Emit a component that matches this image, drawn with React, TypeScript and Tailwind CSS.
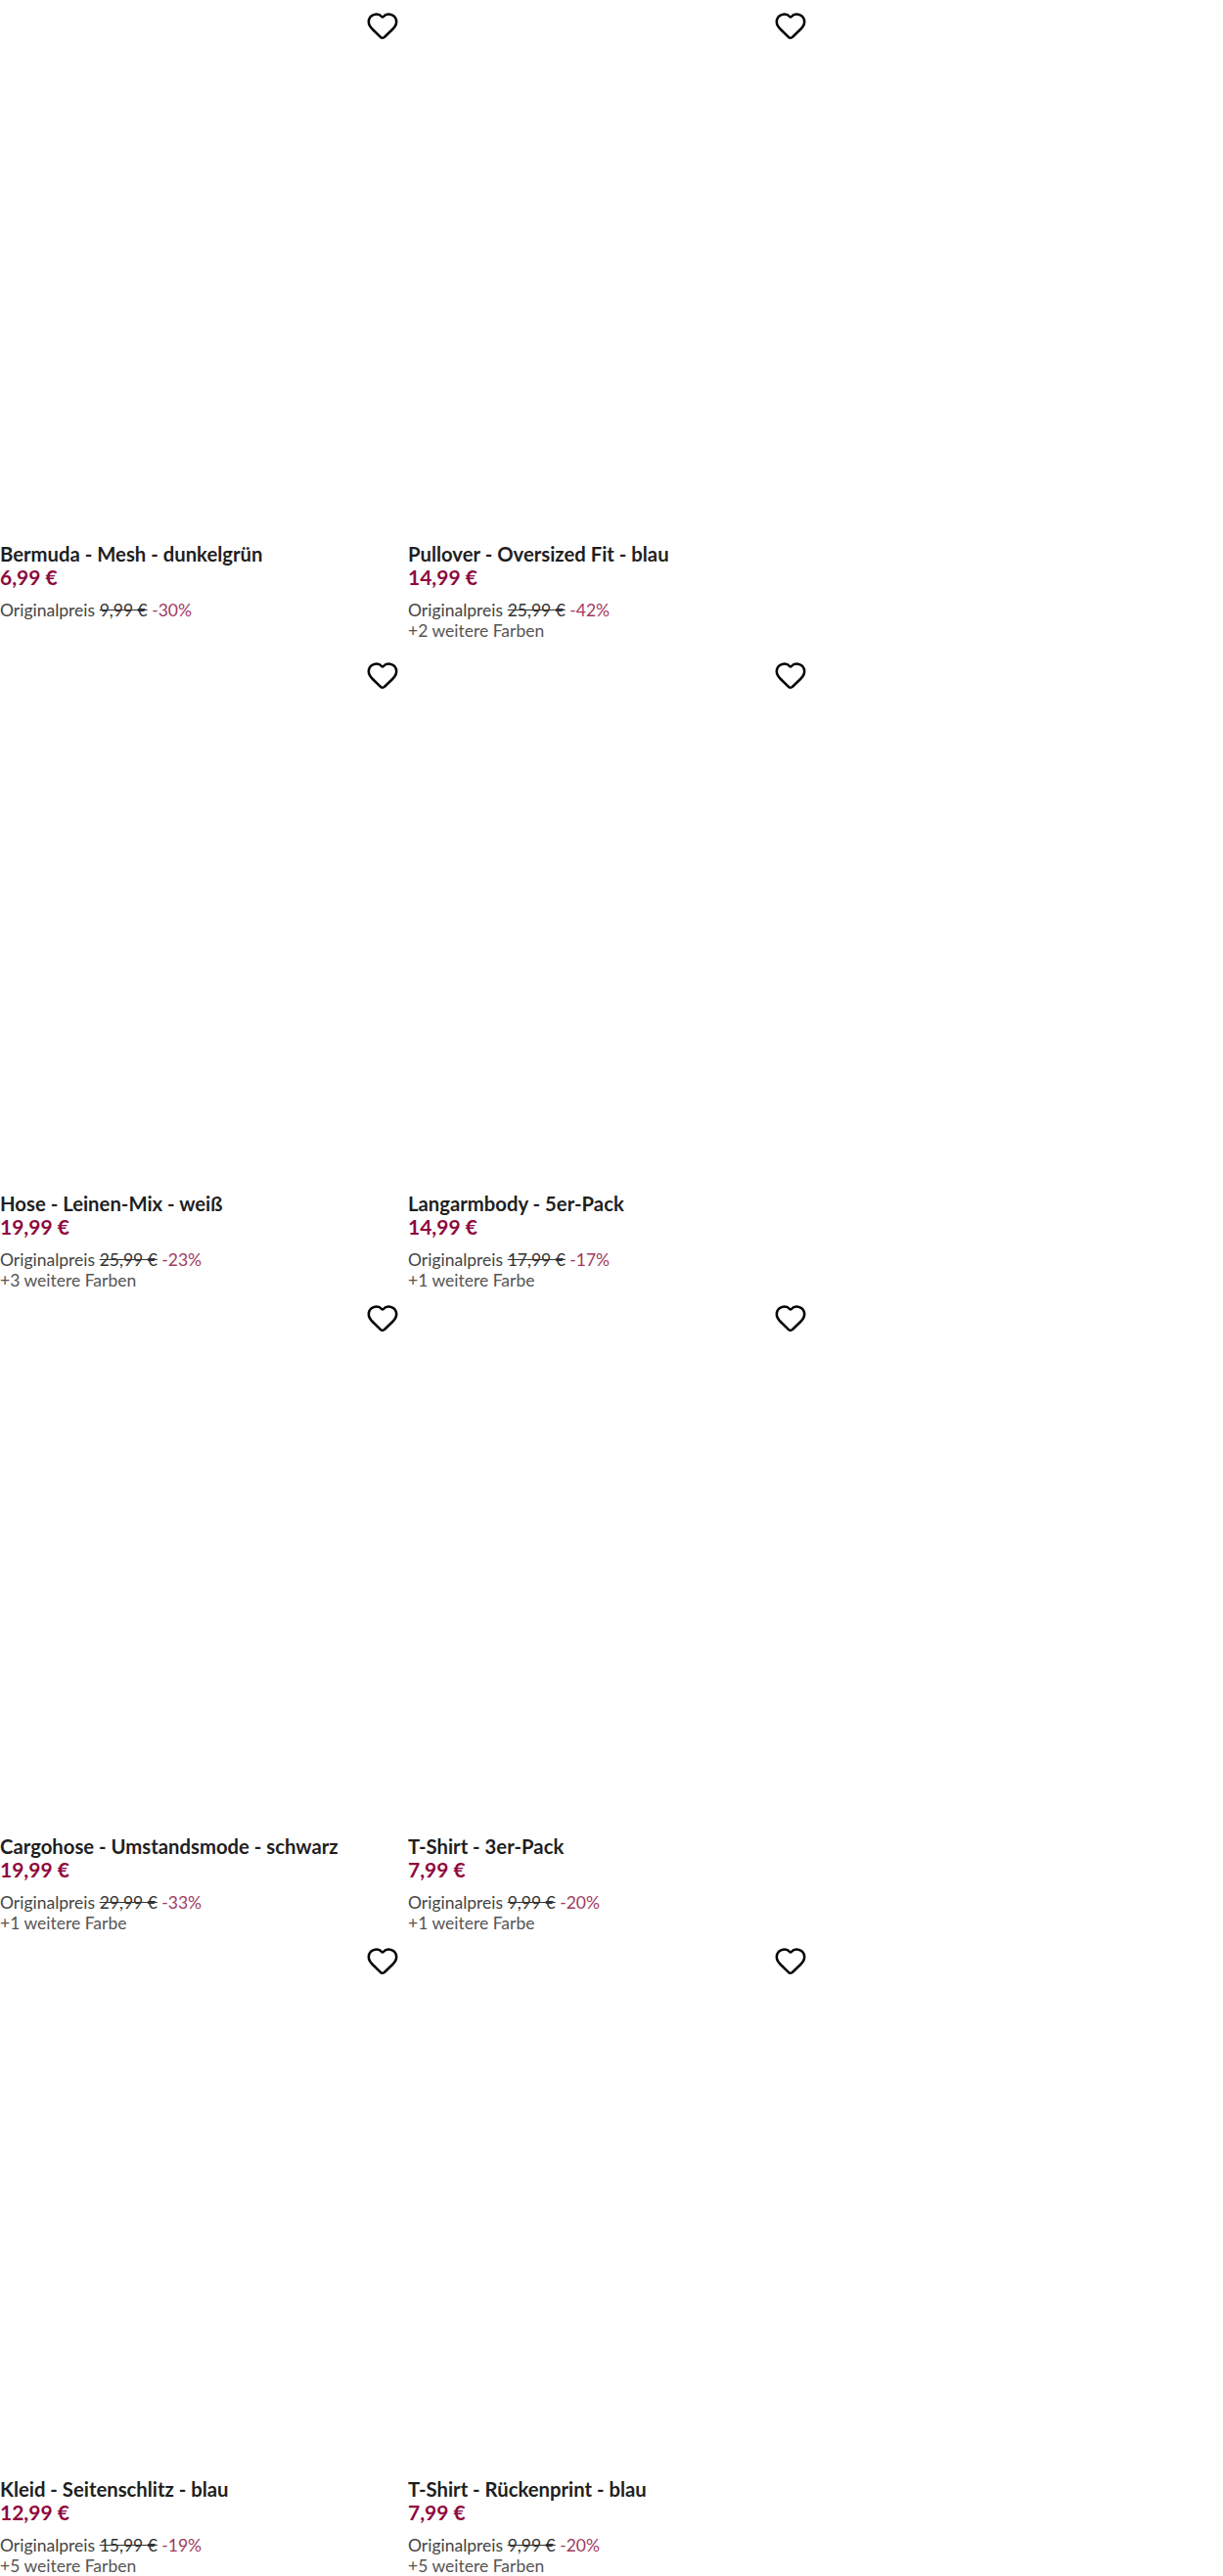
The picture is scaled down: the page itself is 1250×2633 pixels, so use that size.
import { Heart } from "lucide-react";

type Product = {
  title: string;
  price: string;
  original: string;
  discount: string;
  colors?: string;
};

const rows: Product[][] = [
  [
    { title: "Bermuda - Mesh - dunkelgrün", price: "6,99 €", original: "9,99 €", discount: "-30%" },
    { title: "Pullover - Oversized Fit - blau", price: "14,99 €", original: "25,99 €", discount: "-42%", colors: "+2 weitere Farben" },
  ],
  [
    { title: "Hose - Leinen-Mix - weiß", price: "19,99 €", original: "25,99 €", discount: "-23%", colors: "+3 weitere Farben" },
    { title: "Langarmbody - 5er-Pack", price: "14,99 €", original: "17,99 €", discount: "-17%", colors: "+1 weitere Farbe" },
  ],
  [
    { title: "Cargohose - Umstandsmode - schwarz", price: "19,99 €", original: "29,99 €", discount: "-33%", colors: "+1 weitere Farbe" },
    { title: "T-Shirt - 3er-Pack", price: "7,99 €", original: "9,99 €", discount: "-20%", colors: "+1 weitere Farbe" },
  ],
  [
    { title: "Kleid - Seitenschlitz - blau", price: "12,99 €", original: "15,99 €", discount: "-19%", colors: "+5 weitere Farben" },
    { title: "T-Shirt - Rückenprint - blau", price: "7,99 €", original: "9,99 €", discount: "-20%", colors: "+5 weitere Farben" },
  ],
];

function ProductCard({ product }: { product: Product }) {
  return (
    <div className="w-[417px] pr-[9px]">
      {/* Image area, the picture itself is blank */}
      <div className="h-[554px] flex justify-end pt-[9px]">
        <Heart className="w-[34px] h-[34px] text-black" strokeWidth={1.8} />
      </div>
      <p className="text-[20.3px] leading-[24px] font-bold text-[#1f1f1f]">{product.title}</p>
      <p className="text-[21px] leading-[24px] font-bold text-[#8f0a3c]">{product.price}</p>
      <p className="mt-[11px] text-[17.5px] leading-[21px] text-[#444444]">
        Originalpreis <span className="line-through text-[#333333]">{product.original}</span>{" "}
        <span className="text-[#a13a61]">{product.discount}</span>
      </p>
      {product.colors && <p className="text-[17.5px] leading-[21px] text-[#555555]">{product.colors}</p>}
    </div>
  );
}

export default function App() {
  return (
    <div className="bg-white font-['Lato',sans-serif] h-[2633px] overflow-hidden">
      {rows.map((row, i) => (
        <div key={i} className={`flex ${i === 0 ? "h-[664px]" : "h-[657px]"}`}>
          {row.map((product) => (
            <ProductCard key={product.title} product={product} />
          ))}
        </div>
      ))}
    </div>
  );
}
